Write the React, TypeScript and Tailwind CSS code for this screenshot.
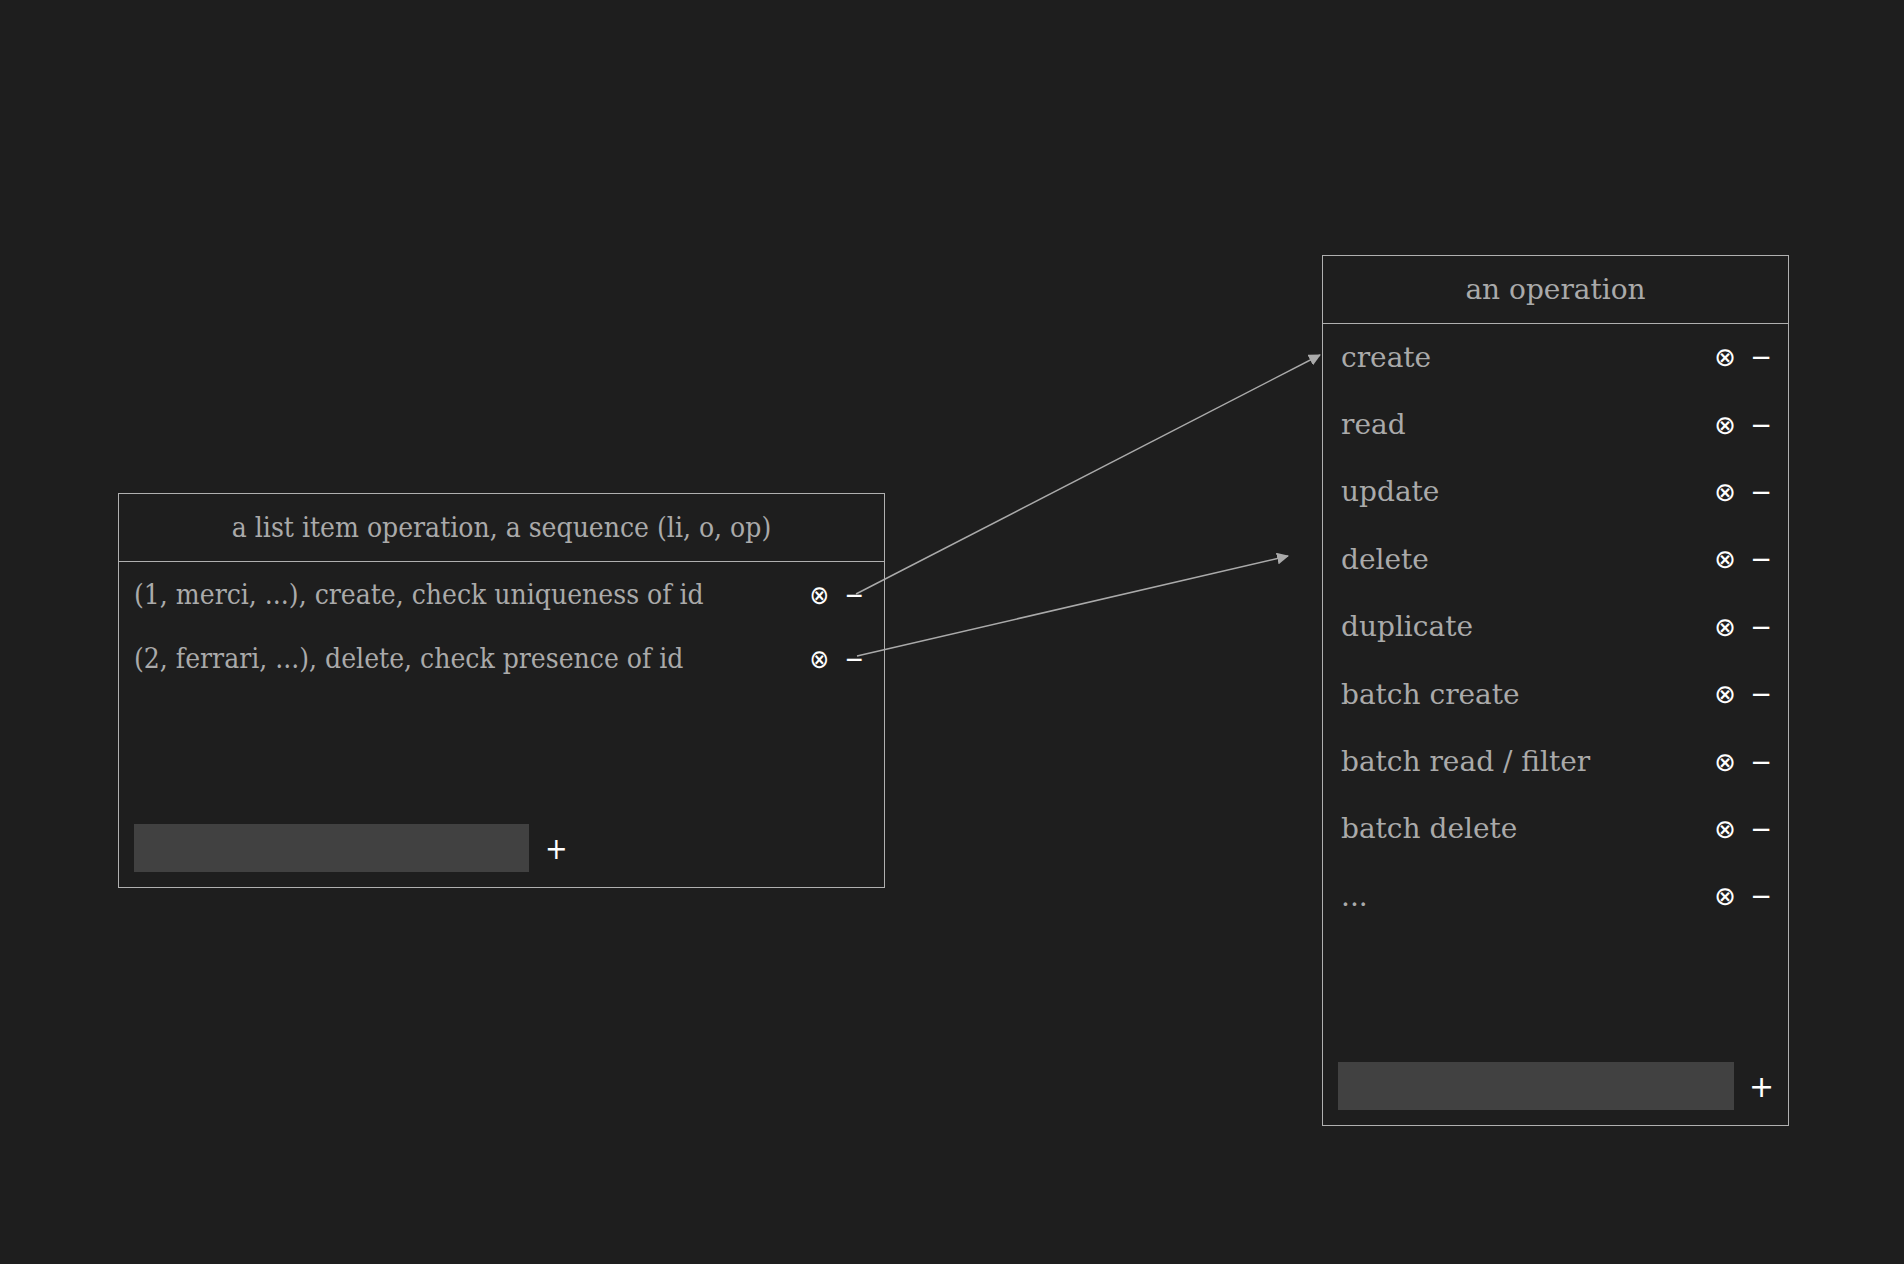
const serif = { fontFamily: "'DejaVu Serif', serif" };
const cond = { fontFamily: "'DejaVu Serif Condensed', 'DejaVu Serif', serif", fontStretch: "condensed" as const };
const sans = { fontFamily: "'DejaVu Sans', sans-serif" };

export default function App() {
  const ops = ["create","read","update","delete","duplicate","batch create","batch read / filter","batch delete","..."];
  return (
    <div className="relative w-[1904px] h-[1264px] bg-[#1e1e1e] overflow-hidden text-[#aaaaaa]" style={serif}>
      <div className="absolute left-[118px] top-[493px] w-[767px] h-[395px] border border-[#b0b0b0] flex flex-col" style={cond}>
        <div className="h-[68px] border-b border-[#b0b0b0] flex items-center justify-center text-[28px]">a list item operation, a sequence (li, o, op)</div>
        <div className="flex flex-col pt-[1px] pl-[15px] pr-[20px]">
          {["(1, merci, ...), create, check uniqueness of id","(2, ferrari, ...), delete, check presence of id"].map(t => (
            <div key={t} className="h-[64px] flex items-center text-[28px]">
              <span className="flex-1 whitespace-nowrap">{t}</span>
              <span className="text-white text-[26px] w-[26px] text-center" style={sans}>⊗</span>
              <span className="text-white text-[26px] ml-[12px]" style={sans}>−</span>
            </div>
          ))}
        </div>
        <div className="flex-1" />
        <div className="flex items-center pl-[15px] pb-[15px]">
          <div className="w-[395px] h-[48px] bg-[#414141]" />
          <span className="text-white text-[30px] ml-[16px]" style={sans}>+</span>
        </div>
      </div>
      <div className="absolute left-[1322px] top-[255px] w-[467px] h-[871px] border border-[#b0b0b0] flex flex-col">
        <div className="h-[68px] border-b border-[#b0b0b0] flex items-center justify-center text-[28px]">an operation</div>
        <div className="flex flex-col pl-[18px] pr-[16px]">
          {ops.map(t => (
            <div key={t} className="h-[67.4px] flex items-center text-[28px]">
              <span className="flex-1 whitespace-nowrap">{t}</span>
              <span className="text-white text-[26px] w-[26px] text-center" style={sans}>⊗</span>
              <span className="text-white text-[26px] ml-[12px]" style={sans}>−</span>
            </div>
          ))}
        </div>
        <div className="flex-1" />
        <div className="flex items-center pl-[15px] pb-[15px]">
          <div className="w-[396px] h-[48px] bg-[#414141]" />
          <span className="text-white text-[30px] ml-[15px]" style={sans}>+</span>
        </div>
      </div>
      <svg className="absolute inset-0 pointer-events-none" width="1904" height="1264">
        <defs>
          <marker id="ah" markerWidth="12" markerHeight="12" refX="11" refY="6" orient="auto" markerUnits="userSpaceOnUse">
            <path d="M0,0 L12,6 L0,12 z" fill="#aaaaaa" />
          </marker>
        </defs>
        <line x1="856" y1="594" x2="1320" y2="355" stroke="#aaaaaa" strokeWidth="1.5" markerEnd="url(#ah)" />
        <line x1="857" y1="656" x2="1288" y2="556" stroke="#aaaaaa" strokeWidth="1.5" markerEnd="url(#ah)" />
      </svg>
    </div>
  );
}
